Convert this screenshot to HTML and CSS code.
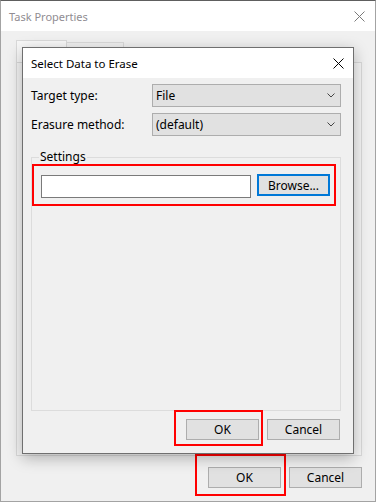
FILE: index.html
```html
<!DOCTYPE html>
<html lang="en">
<head>
    <meta charset="UTF-8">
    <meta name="viewport" content="width=device-width, initial-scale=1.0">
    <title>Task Properties</title>
    <link rel="stylesheet" href="styles.css">
</head>
<body>

<div class="window">
    <div class="titlebar">
        <span class="title">Task Properties</span>
        <svg class="close close-inactive" width="11" height="11" viewBox="0 0 11 11">
            <path d="M0.5 0.5 L10.5 10.5 M10.5 0.5 L0.5 10.5" stroke="currentColor" stroke-width="1" fill="none"/>
        </svg>
    </div>
    <div class="content">
        <div class="tabs">
            <span class="tab tab-active"></span>
            <span class="tab"></span>
        </div>
        <div class="tabpage"></div>
        <div class="buttons">
            <span class="mark mark-outer"><button class="btn">OK</button></span>
            <button class="btn btn-cancel">Cancel</button>
        </div>
    </div>

    <div class="dialog">
        <div class="titlebar dialog-titlebar">
            <span class="title dialog-title">Select Data to Erase</span>
            <svg class="close" width="11" height="11" viewBox="0 0 11 11">
                <path d="M0.5 0.5 L10.5 10.5 M10.5 0.5 L0.5 10.5" stroke="currentColor" stroke-width="1" fill="none"/>
            </svg>
        </div>
        <div class="dialog-body">
            <div class="form">
                <label>Target type:</label>
                <div class="combo">
                    <span>File</span>
                    <svg width="8" height="5" viewBox="0 0 8 5"><path d="M0.5 0.5 L4 4 L7.5 0.5" stroke="#444" fill="none"/></svg>
                </div>
                <label>Erasure method:</label>
                <div class="combo">
                    <span>(default)</span>
                    <svg width="8" height="5" viewBox="0 0 8 5"><path d="M0.5 0.5 L4 4 L7.5 0.5" stroke="#444" fill="none"/></svg>
                </div>
            </div>

            <fieldset class="group">
                <legend>Settings</legend>
                <div class="mark mark-path">
                    <input type="text" class="path">
                    <button class="btn btn-browse">Browse...</button>
                </div>
            </fieldset>

            <div class="buttons dialog-buttons">
                <span class="mark mark-inner"><button class="btn">OK</button></span>
                <button class="btn btn-cancel">Cancel</button>
            </div>
        </div>
    </div>
</div>

</body>
</html>
```

FILE: styles.css
```css
* {
    box-sizing: border-box;
}
body {
    margin: 0;
    font-family: "Noto Sans", sans-serif;
    font-size: 11px;
    color: #000;
    background: #f0f0f0;
}
.window {
    position: relative;
    width: 376px;
    height: 502px;
    display: flex;
    flex-direction: column;
    background: #f0f0f0;
    border: 1px solid #a3a3a3;
    border-top-color: #5e5e5e;
}
.titlebar {
    height: 30px;
    flex: none;
    display: flex;
    align-items: center;
    justify-content: space-between;
    background: #fff;
    padding: 0 10px 0 8px;
}
.title {
    font-size: 11px;
    color: #908c92;
}
.close {
    color: #7a7a7a;
    display: block;
}
.content {
    flex: 1;
    display: flex;
    flex-direction: column;
    padding: 9px 13px 5px 15px;
}
.tabs {
    height: 22px;
    display: flex;
    align-items: flex-end;
}
.tab {
    display: block;
    width: 51px;
    height: 22px;
    background: #f7f7f7;
    border: 1px solid #d9d9d9;
    border-bottom: none;
}
.tab + .tab {
    width: 57px;
    height: 20px;
    background: #f0f0f0;
    border-left: none;
}
.tabpage {
    flex: 1;
    background: #f4f4f4;
    border: 1px solid #d9d9d9;
}
.buttons {
    display: flex;
    justify-content: flex-end;
    align-items: flex-start;
    gap: 3px;
    margin-top: -2px;
}
.mark {
    display: block;
    border: 2px solid #f00;
}
.mark-outer {
    padding: 11px 3px 6px 11px;
}
.btn {
    width: 73px;
    height: 21px;
    padding: 0;
    font-family: inherit;
    font-size: 12px;
    color: #000;
    background: #e1e1e1;
    border: 1px solid #adadad;
    display: block;
}
.buttons .btn-cancel {
    margin-top: 13px;
}

/* dialog floating over the task window */
.dialog {
    position: absolute;
    left: 21px;
    top: 46px;
    width: 332px;
    height: 407px;
    display: flex;
    flex-direction: column;
    background: #f0f0f0;
    border: 1px solid #6f6f6f;
    box-shadow: 0 4px 14px rgba(0, 0, 0, 0.28);
}
.dialog-titlebar {
    padding: 0 9px 0 8px;
}
.dialog-title {
    font-size: 11.5px;
    color: #000;
}
.dialog-titlebar .close {
    color: #000;
}
.dialog-body {
    flex: 1;
    display: flex;
    flex-direction: column;
    padding: 6px 12px 7px 8px;
}
.form {
    display: grid;
    grid-template-columns: 121px 1fr;
    row-gap: 6px;
    align-items: center;
}
.form label {
    font-size: 12px;
}
.combo {
    height: 23px;
    display: flex;
    align-items: center;
    justify-content: space-between;
    padding: 0 5px 0 3px;
    font-size: 12px;
    background: #e1e1e1;
    border: 1px solid #adadad;
}
.combo svg {
    display: block;
}
.group {
    flex: 1;
    margin: 14px 0 0 0;
    padding: 0;
    border: 1px solid #dcdcdc;
    min-width: 0;
}
.group legend {
    margin-left: 7px;
    padding: 0 1px;
    font-size: 12px;
    line-height: 14px;
}
.mark-path {
    display: flex;
    align-items: flex-start;
    gap: 6px;
    margin-right: 4px;
    padding: 8px 4px 6px 7px;
}
.path {
    width: 210px;
    height: 23px;
    margin: 1px 0 0 0;
    background: #fff;
    border: 1px solid #7a7a7a;
    outline: none;
}
.btn-browse {
    height: 22px;
    border: 2px solid #0078d7;
}
.dialog-buttons {
    gap: 4px;
    margin-top: -1px;
    margin-right: 1px;
}
.mark-inner {
    padding: 7px 2px 4px 10px;
}
.dialog-buttons .btn-cancel {
    margin-top: 9px;
}
```
